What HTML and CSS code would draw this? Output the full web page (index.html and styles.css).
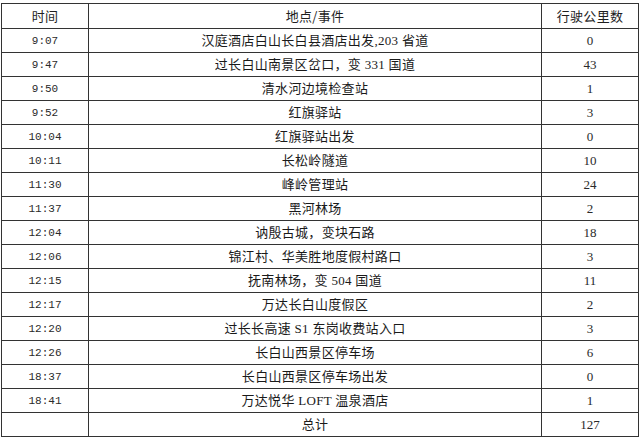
FILE: index.html
```html
<!DOCTYPE html>
<html lang="zh">
<head>
<meta charset="utf-8">
<title>行程表</title>
<link rel="stylesheet" href="styles.css">
</head>
<body>
<table class="trip">
<colgroup><col class="c-time"><col class="c-place"><col class="c-km"></colgroup>
<thead>
<tr class="head"><th>时间</th><th>地点/事件</th><th>行驶公里数</th></tr>
</thead>
<tbody>
<tr><td class="time">9:07</td><td class="place">汉庭酒店白山长白县酒店出发,203 省道</td><td class="km">0</td></tr>
<tr><td class="time">9:47</td><td class="place">过长白山南景区岔口，变 331 国道</td><td class="km">43</td></tr>
<tr><td class="time">9:50</td><td class="place">清水河边境检查站</td><td class="km">1</td></tr>
<tr><td class="time">9:52</td><td class="place">红旗驿站</td><td class="km">3</td></tr>
<tr><td class="time">10:04</td><td class="place">红旗驿站出发</td><td class="km">0</td></tr>
<tr><td class="time">10:11</td><td class="place">长松岭隧道</td><td class="km">10</td></tr>
<tr><td class="time">11:30</td><td class="place">峰岭管理站</td><td class="km">24</td></tr>
<tr><td class="time">11:37</td><td class="place">黑河林场</td><td class="km">2</td></tr>
<tr><td class="time">12:04</td><td class="place">讷殷古城，变块石路</td><td class="km">18</td></tr>
<tr><td class="time">12:06</td><td class="place">锦江村、华美胜地度假村路口</td><td class="km">3</td></tr>
<tr><td class="time">12:15</td><td class="place">抚南林场，变 504 国道</td><td class="km">11</td></tr>
<tr><td class="time">12:17</td><td class="place">万达长白山度假区</td><td class="km">2</td></tr>
<tr><td class="time">12:20</td><td class="place">过长长高速 S1 东岗收费站入口</td><td class="km">3</td></tr>
<tr><td class="time">12:26</td><td class="place">长白山西景区停车场</td><td class="km">6</td></tr>
<tr><td class="time">18:37</td><td class="place">长白山西景区停车场出发</td><td class="km">0</td></tr>
<tr><td class="time">18:41</td><td class="place">万达悦华 LOFT 温泉酒店</td><td class="km">1</td></tr>
<tr><td class="time"></td><td class="place">总计</td><td class="km">127</td></tr>
</tbody>
</table>
</body>
</html>
```
FILE: styles.css
```css
html, body {
  margin: 0;
  padding: 0;
  background: #ffffff;
}
body {
  width: 640px;
  height: 438px;
  overflow: hidden;
}
.trip {
  border-collapse: collapse;
  table-layout: fixed;
  width: 638px;
  margin: 3px 0 0 1px;
  color: #1a1a1a;
  font-family: "Liberation Serif", "Noto Sans CJK SC", sans-serif;
  font-size: 13px;
}
.c-time { width: 87px; }
.c-place { width: 453px; }
.c-km { width: 97px; }
.trip th, .trip td {
  border: 1px solid #333333;
  padding: 0;
  text-align: center;
  vertical-align: middle;
  line-height: 16px;
  white-space: nowrap;
}
.trip th {
  font-weight: normal;
  font-family: "Noto Sans CJK SC", sans-serif;
  letter-spacing: 0.3px;
  color: #1e1e1e;
}
.head { height: 25px; }
.trip tbody tr { height: 24px; }
.place {
  letter-spacing: 0.3px;
}
.time {
  font-family: "Liberation Mono", monospace;
  font-size: 11px;
  color: #2a2a2a;
}
.km {
  font-family: "Liberation Serif", serif;
  font-size: 13px;
  color: #2a2a2a;
}
```
